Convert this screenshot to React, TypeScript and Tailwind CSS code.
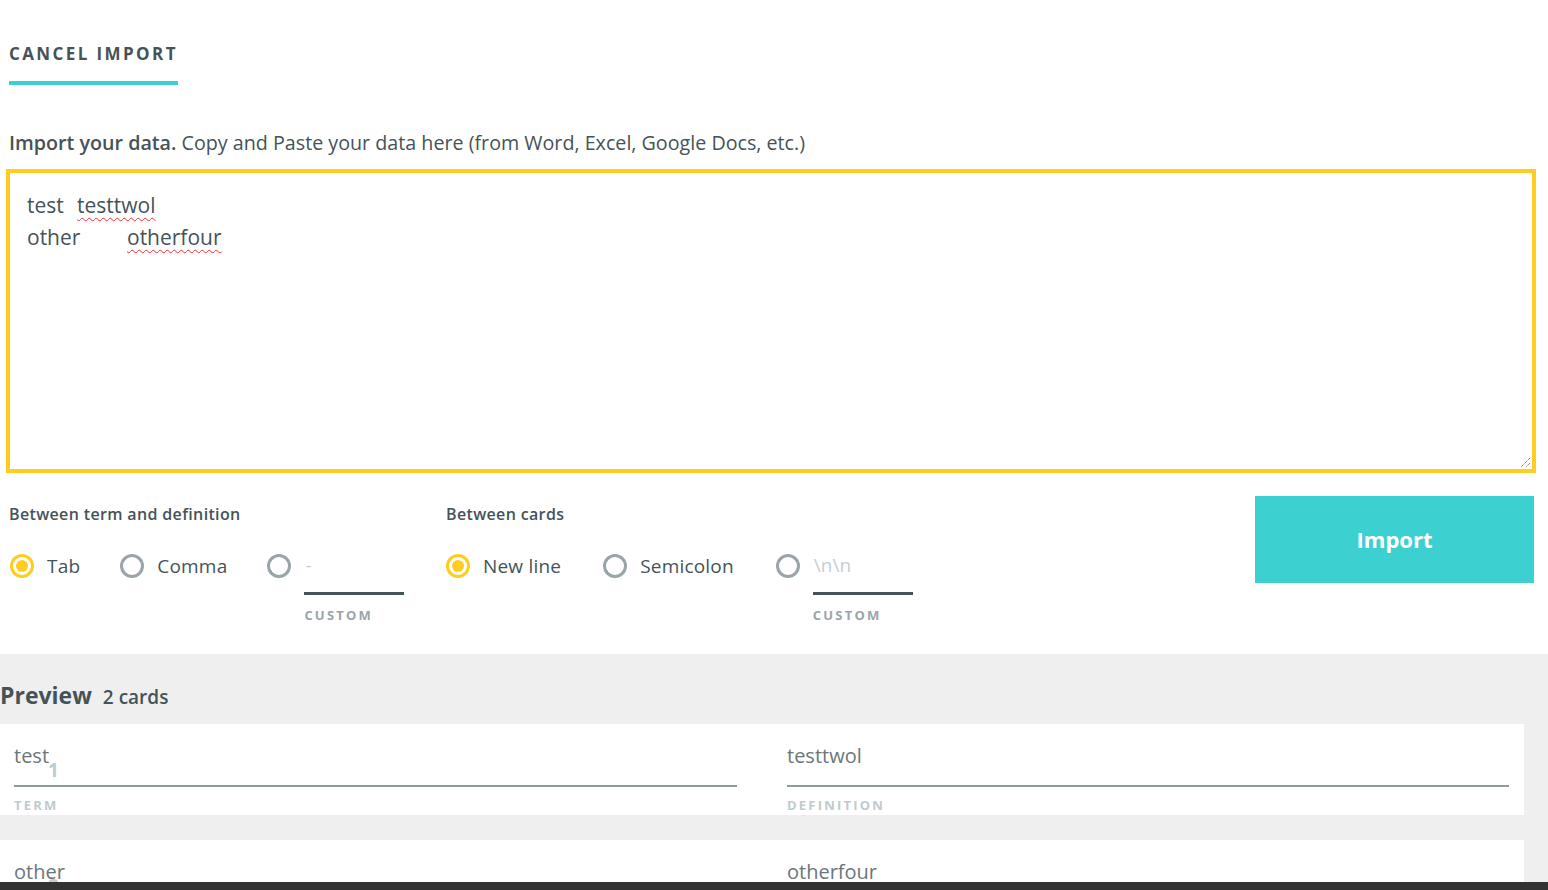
import React from 'react';

// --- RADIO ---
interface RadioProps {
  checked?: boolean;
}

const Radio: React.FC<RadioProps> = ({ checked }) => (
  <span
    className={`flex h-6 w-6 shrink-0 items-center justify-center rounded-full border-[3px] ${
      checked ? 'border-[#ffcd1f]' : 'border-[#9aa5a9]'
    }`}
  >
    {checked && <span className="h-3 w-3 rounded-full bg-[#ffcd1f]" />}
  </span>
);

const RadioOption: React.FC<{ label: string; checked?: boolean; className?: string }> = ({ label, checked, className = '' }) => (
  <label className={`flex h-[52px] items-center ${className}`}>
    <Radio checked={checked} />
    <span className="ml-[13px] text-[19px] tracking-[0.2px] text-[#455358]">{label}</span>
  </label>
);

const CustomOption: React.FC<{ placeholder: string }> = ({ placeholder }) => (
  <div className="flex items-start">
    <div className="flex h-[52px] items-center">
      <Radio />
    </div>
    <div className="ml-[13px] w-[100px]">
      <div className="flex h-[55px] items-start border-b-[3px] border-[#455358] pl-[1px] pt-[12px] text-[19px] leading-[26px] text-[#c5cfd2]">
        {placeholder}
      </div>
      <div className="mt-[12px] text-[13px] font-bold leading-4 tracking-[2.2px] text-[#9aa5a9]">CUSTOM</div>
    </div>
  </div>
);

// --- PREVIEW CARD ---
const CardField: React.FC<{ value: string; label: string; className?: string }> = ({ value, label, className = '' }) => (
  <div className={className}>
    <div className="border-b-2 border-[#8f9a9c] pb-[15px] text-[20px] leading-[28px] text-[#6b767a]">{value}</div>
    <div className="mt-[10px] text-[13px] font-bold leading-4 tracking-[2.2px] text-[#c0cbce]">{label}</div>
  </div>
);

const PreviewCard: React.FC<{ index: number; term: string; definition: string }> = ({ index, term, definition }) => (
  <div className="relative flex h-[91px] w-[1524px] bg-white pt-[18px]">
    <CardField value={term} label="TERM" className="ml-[14px] w-[723px]" />
    <CardField value={definition} label="DEFINITION" className="ml-[50px] w-[722px]" />
    {/* card number peeking under the term */}
    <span className="absolute left-[48px] top-[34px] text-[19px] font-bold leading-6 text-[#c0cbce]">{index}</span>
  </div>
);

export default function App() {
  return (
    <div className="relative min-h-screen bg-white font-['Open_Sans','Noto_Sans',sans-serif] text-[#455358]">
      {/* Header tab */}
      <div className="px-[9px] pt-[42px]">
        <div className="inline-block border-b-4 border-[#3ccfcf] pb-[15px] text-[17px] font-bold leading-6 tracking-[2.4px]">
          CANCEL IMPORT
        </div>
      </div>

      {/* Import text */}
      <p className="mt-[45px] px-[9px] text-[19.7px] leading-[26px]">
        <span className="font-semibold">Import your data.</span> Copy and Paste your data here (from Word, Excel, Google Docs, etc.)
      </p>

      <div className="relative ml-[6px] mt-[13px] h-[304px] w-[1530px] border-4 border-[#ffcd1f] pl-[17px] pt-[16px] text-[21px] leading-8 whitespace-pre [tab-size:50px]">
        <div>
          test{'\t'}
          <span className="underline decoration-red-500 decoration-wavy decoration-1 underline-offset-4">testtwol</span>
        </div>
        <div>
          other{'\t'}
          <span className="underline decoration-red-500 decoration-wavy decoration-1 underline-offset-4">otherfour</span>
        </div>
        <svg className="absolute bottom-[1px] right-[1px]" width="11" height="11" viewBox="0 0 11 11">
          <path d="M10 1 L1 10 M10 6 L6 10" stroke="#555" strokeWidth="1" strokeDasharray="1 1" />
        </svg>
      </div>

      {/* Delimiter options */}
      <div className="mt-[23px] flex pb-[31px] pl-[9px] pr-[14px]">
        <div className="w-[437px] pt-[8px]">
          <div className="text-[16px] font-semibold leading-5 tracking-[0.35px]">Between term and definition</div>
          <div className="mt-[16px] flex items-start">
            <RadioOption label="Tab" checked className="ml-[1px]" />
            <RadioOption label="Comma" className="ml-[40px]" />
            <div className="ml-[40px]">
              <CustomOption placeholder="-" />
            </div>
          </div>
        </div>
        <div className="pt-[8px]">
          <div className="text-[16px] font-semibold leading-5 tracking-[0.35px]">Between cards</div>
          <div className="mt-[16px] flex items-start">
            <RadioOption label="New line" checked />
            <RadioOption label="Semicolon" className="ml-[42px]" />
            <div className="ml-[42px]">
              <CustomOption placeholder="\n\n" />
            </div>
          </div>
        </div>
        <button className="ml-auto flex h-[87px] w-[279px] items-center justify-center bg-[#3dd0d0] text-[22px] font-bold text-white">
          Import
        </button>
      </div>

      {/* Preview */}
      <div className="bg-[#efefef] pb-[20px] pt-[27px]">
        <div className="flex items-baseline leading-[28px]">
          <span className="text-[23px] font-bold">Preview</span>
          <span className="ml-[11px] text-[19px] font-semibold">2 cards</span>
        </div>
        <div className="mt-[13px] flex flex-col gap-[25px]">
          <PreviewCard index={1} term="test" definition="testtwol" />
          <PreviewCard index={2} term="other" definition="otherfour" />
        </div>
      </div>

      {/* bottom bar */}
      <div className="fixed bottom-0 left-0 right-0 h-[8px] bg-[#333333]" />
    </div>
  );
}
